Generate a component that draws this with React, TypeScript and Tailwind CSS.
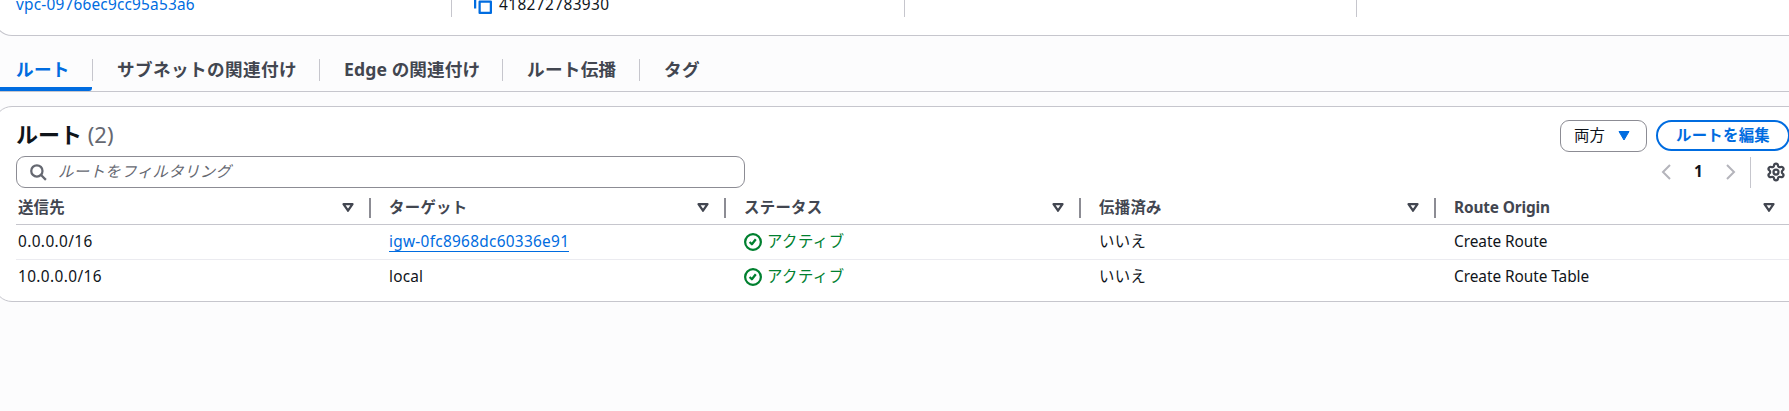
import React from "react";
import { Settings } from "lucide-react";

const routes = [
  { dest: "0.0.0.0/16", target: "igw-0fc8968dc60336e91", link: true, origin: "Create Route" },
  { dest: "10.0.0.0/16", target: "local", link: false, origin: "Create Route Table" },
];

const headers = [
  { label: "送信先", spacing: "tracking-[0.2px]" },
  { label: "ターゲット", spacing: "tracking-[0.3px]" },
  { label: "ステータス", spacing: "tracking-[0.3px]" },
  { label: "伝播済み", spacing: "tracking-[0.3px]" },
  { label: "Route Origin", spacing: "tracking-[-0.15px]" },
];
const tabs = [
  { label: "サブネットの関連付け", size: "w-[227px] tracking-[0.4px]" },
  { label: "Edge の関連付け", size: "w-[183px] tracking-[0.1px]" },
  { label: "ルート伝播", size: "w-[137px] tracking-[0.3px]" },
  { label: "タグ", size: "w-[90px] tracking-[0.3px]" },
];
const grid = "grid grid-cols-[355px_355px_355px_355px_358px]";

function CopyIcon() {
  return (
    <svg width="18" height="18" viewBox="0 0 16 16" fill="none" stroke="#006ce0" strokeWidth="2" strokeLinejoin="round">
      <path d="M15 5H5v10h10V5Z" />
      <path d="M11 1H1v10" />
    </svg>
  );
}

function CheckIcon() {
  return (
    <svg className="mt-[2px]" width="18" height="18" viewBox="0 0 16 16" fill="none" stroke="#00802f" strokeWidth="2">
      <circle cx="8" cy="8" r="7" />
      <path d="m5 8 2 2 3.5-4.5" strokeLinejoin="round" />
    </svg>
  );
}

function SortIcon() {
  return (
    <svg width="18" height="18" viewBox="0 0 16 16" fill="none" stroke="#424650" strokeWidth="2" strokeLinejoin="round">
      <path d="M4 4.6h8l-4 5.8-4-5.8Z" />
    </svg>
  );
}

export default function App() {
  return (
    <div className="flex h-[411px] w-full flex-col overflow-hidden bg-[#fcfcfd] font-['Noto_Sans','Noto_Sans_CJK_JP',sans-serif] text-[15.4px] leading-[22px] text-[#0f141a]">
      <section className="-ml-[6px] -mr-[20px] grid h-9 shrink-0 grid-cols-[458px_452px_452px_1fr] rounded-b-[18px] border-x border-b border-[#c6c6cd] bg-white">
        <div className="h-[17px] w-[457px] border-r border-[#c6c6cd] pl-[21px]">
          <a className="-mt-[6px] block tracking-[0.2px] text-[#006ce0]">vpc-09766ec9cc95a53a6</a>
        </div>
        <div className="flex h-[17px] gap-[7px] border-r border-[#c6c6cd] pl-[21px]">
          <span className="-mt-1"><CopyIcon /></span>
          <span className="-mt-[6px] tracking-[0.4px]">418272783930</span>
        </div>
        <div className="h-[17px] border-r border-[#c6c6cd]" />
      </section>

      <nav className="flex h-14 shrink-0 items-start border-b border-[#c6c6cd] text-[17.6px] font-bold text-[#424650]">
        <div className="h-[55px] w-[92px] rounded-br-[3px] border-b-4 border-[#006ce0] pl-4 pt-[22px] tracking-[0.3px] text-[#006ce0]">
          ルート
        </div>
        {tabs.map((t) => (
          <div key={t.label} className={`${t.size} mt-[23px] h-[22px] whitespace-nowrap border-l border-[#c6c6cd] pl-[24px] leading-5`}>
            {t.label}
          </div>
        ))}
      </nav>

      <section className="-ml-[6px] -mr-[20px] mt-[14px] h-[196px] shrink-0 rounded-[18px] border border-[#c6c6cd] bg-white pl-[21px]">
        <div className="flex h-[49px] w-[1774px] pt-[13px]">
          <h2 className="mt-px flex-1 text-[22px] font-bold leading-[26px]">
            ルート <span className="font-normal text-[#656871]">(2)</span>
          </h2>
          <div className="flex h-8 w-[87px] items-center justify-between rounded-[9px] border border-[#8c8c94] pb-px pl-[13px] pr-[16px]">
            両方
            <svg width="12" height="10" viewBox="0 0 12 10"><path d="M1 .5h10l-5 8.5Z" fill="#006ce0" stroke="#006ce0" strokeLinejoin="round" /></svg>
          </div>
          <button className="ml-[9px] h-[31px] w-[134px] rounded-full border-2 border-[#006ce0] font-bold leading-[26px] tracking-[0.25px] text-[#006ce0]">
            ルートを編集
          </button>
        </div>
        <div className="flex h-8 w-[1773px] items-center justify-between">
          <div className="flex h-8 w-[729px] items-center gap-[11px] rounded-[9px] border border-[#8c8c94] pl-3 italic tracking-[0.4px] text-[#656871]">
            <svg width="18" height="18" viewBox="0 0 16 16" fill="none" stroke="#656871" strokeWidth="2"><circle cx="7" cy="7" r="5" /><path d="m15 15-4.5-4.5" /></svg>
            ルートをフィルタリング
          </div>
          <div className="flex items-center">
            <svg width="10" height="16" viewBox="0 0 10 16" fill="none" stroke="#b4b4bb" strokeWidth="2"><path d="M9 1 2 8l7 7" /></svg>
            <b className="mx-[22px] w-[11px] text-center">1</b>
            <svg width="10" height="16" viewBox="0 0 10 16" fill="none" stroke="#b4b4bb" strokeWidth="2"><path d="m1 1 7 7-7 7" /></svg>
            <div className="ml-[14px] h-[31px] border-l border-[#c6c6cd]" />
            <Settings className="-mt-px ml-[15px] mr-[3px]" size={20} strokeWidth={2.7} color="#424650" />
          </div>
        </div>
        <div className={`${grid} h-[37px] border-b border-[#c6c6cd] font-bold text-[#424650]`}>
          {headers.map((h) => (
            <div
              key={h.label}
              className="mt-[10px] flex h-5 items-center justify-between border-r-2 border-[#8c8c94] pl-[18px] pr-[12px] first:pl-[2px] last:border-0 last:pr-[16px]"
            >
              <span className={`${h.spacing} -mt-px`}>{h.label}</span>
              <SortIcon />
            </div>
          ))}
        </div>
        {routes.map((r) => (
          <div key={r.dest} className={`${grid} h-[35px] items-center border-b border-[#ebebf0] last:border-transparent`}>
            <span className="pl-[2px] tracking-[0.38px]">{r.dest}</span>
            <span className="pl-[18px]">
              <span className={r.link ? "inline-block h-[20px] border-b border-[#006ce0] leading-5 tracking-[0.28px] text-[#006ce0]" : "tracking-[0.2px]"}>{r.target}</span>
            </span>
            <span className="flex gap-[5px] pl-[18px] tracking-[0.45px] text-[#00802f]"><CheckIcon />アクティブ</span>
            <span className="pl-[18px] tracking-[0.3px]">いいえ</span>
            <span className="pl-[18px] tracking-[-0.05px]">{r.origin}</span>
          </div>
        ))}
      </section>
    </div>
  );
}
